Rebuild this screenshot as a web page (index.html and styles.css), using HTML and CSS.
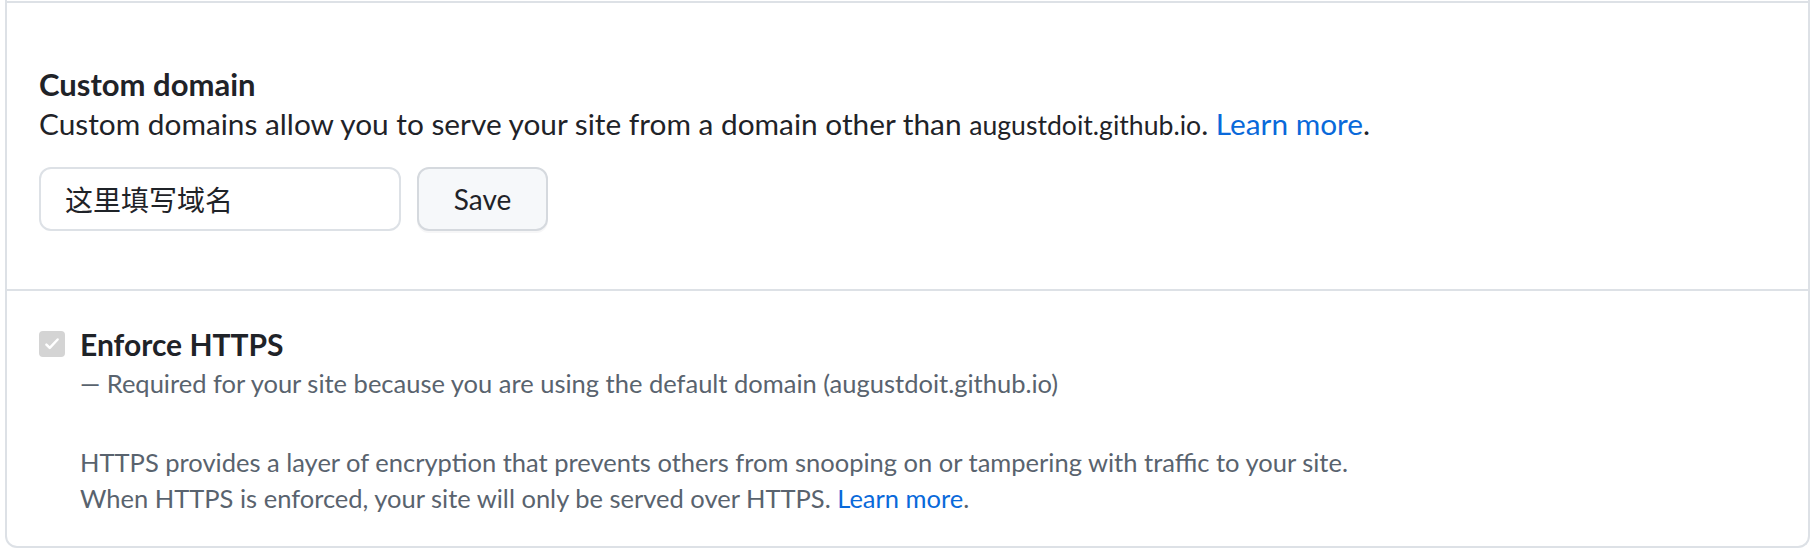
FILE: index.html
```html
<!DOCTYPE html>
<html lang="en">
<head>
<meta charset="utf-8">
<title>Pages settings</title>
<link rel="stylesheet" href="styles.css">
</head>
<body>
<div class="box">
  <section class="row row-domain">
    <h3 class="label">Custom domain</h3>
    <p class="desc">Custom domains allow you to serve your site from a domain other than <code class="domain">augustdoit.github.io</code>. <a class="link" href="#">Learn more</a>.</p>
    <form class="domain-form">
      <input class="input" type="text" value="这里填写域名">
      <button class="btn" type="button">Save</button>
    </form>
  </section>
  <section class="row row-https">
    <div class="check">
      <span class="checkbox"><svg viewBox="0 0 16 16" width="18" height="18"><path d="M3 8.5l3 3 7-7.5" fill="none" stroke="#fff" stroke-width="2.2" stroke-linecap="round" stroke-linejoin="round"/></svg></span>
      <span class="check-title">Enforce HTTPS</span>
    </div>
    <p class="note note-req">— Required for your site because you are using the default domain (augustdoit.github.io)</p>
    <p class="note note-info">HTTPS provides a layer of encryption that prevents others from snooping on or tampering with traffic to your site.<br>When HTTPS is enforced, your site will only be served over HTTPS. <a class="link" href="#">Learn more</a>.</p>
  </section>
</div>
</body>
</html>
```
FILE: styles.css
```css
html, body {
  margin: 0;
  padding: 0;
  background: #ffffff;
}
body {
  font-family: Lato, "Noto Sans CJK SC", sans-serif;
  color: #1f2328;
}
.box {
  margin-left: 5px;
  padding-top: 1px;
  border: 2px solid #dde1e6;
  border-top: 0;
  border-radius: 0 0 12px 12px;
  height: 548px;
  box-sizing: border-box;
}
.row {
  border-top: 2px solid #dde1e6;
  padding-left: 32px;
}
.row-domain {
  padding-top: 61px;
  height: 288px;
  box-sizing: border-box;
}
.label {
  margin: 0;
  font-size: 31px;
  line-height: 40px;
  font-weight: 700;
}
.desc {
  margin: 2px 0 0;
  font-size: 29.8px;
  line-height: 36px;
}
.domain {
  font-family: Lato, sans-serif;
  font-size: 26.6px;
}
.link {
  color: #0969da;
  text-decoration: none;
}
.domain-form {
  display: flex;
  gap: 16px;
  margin-top: 24px;
}
.input {
  width: 362px;
  height: 64px;
  box-sizing: border-box;
  border: 2px solid #dde1e6;
  border-radius: 12px;
  padding: 0 24px;
  font-family: "Noto Sans CJK SC", sans-serif;
  font-size: 28px;
  color: #1f2328;
  background: #fff;
}
.btn {
  width: 131px;
  height: 64px;
  box-sizing: border-box;
  border: 2px solid #d5d9de;
  border-radius: 12px;
  background: #f6f8fa;
  box-shadow: 0 2px 0 rgba(31, 35, 40, 0.04);
  font-family: Lato, sans-serif;
  font-size: 28px;
  color: #1f2328;
}
.row-https {
  padding-top: 33px;
}
.check {
  display: flex;
  align-items: center;
  gap: 15px;
  height: 40px;
}
.checkbox {
  width: 26px;
  height: 26px;
  border-radius: 4px;
  background: #d4d4d4;
  display: flex;
  align-items: center;
  justify-content: center;
}
.check-title {
  font-size: 30px;
  font-weight: 700;
  line-height: 40px;
}
.note {
  margin: 0;
  padding-left: 41px;
  font-size: 25.5px;
  line-height: 36px;
  color: #59636e;
}
.note-req {
  margin-top: 1px;
}
.note-info {
  margin-top: 43px;
}
```
